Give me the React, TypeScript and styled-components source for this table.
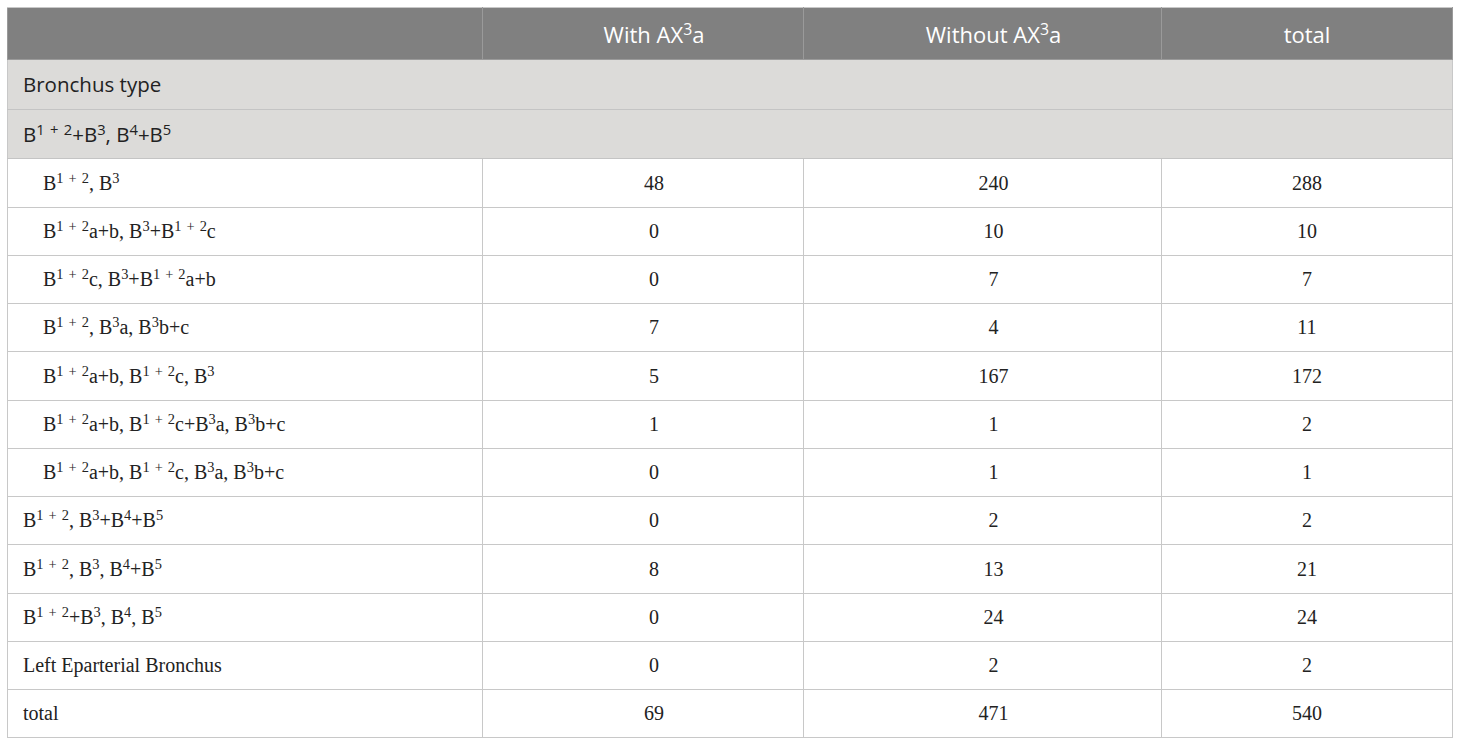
import React from "react";
import styled, { createGlobalStyle } from "styled-components";

const Global = createGlobalStyle`
  html, body { margin: 0; padding: 0; background: #ffffff; }
  body { padding: 7px 0 0 7px; }
`;

const Table = styled.table`
  border-collapse: collapse;
  width: 1445px;
  table-layout: fixed;
  border: 1px solid #c8c8c8;
`;

const HeadRow = styled.tr`
  height: 52px;
  background: #808080;
`;

const HeadCell = styled.th<{ $pad?: number }>`
  border: 1px solid #9a9a9a;
  border-top-color: #c8c8c8;
  color: #ffffff;
  font-family: "Open Sans", "Liberation Sans", sans-serif;
  font-weight: 400;
  font-size: 22px;
  text-align: center;
  padding: 0 0 0 ${(p) => p.$pad ?? 0}px;
  vertical-align: middle;
`;

const GroupRow = styled.tr`
  height: 49.7px;
  background: #dcdbd9;
`;

const GroupCell = styled.td`
  border-top: 1px solid #c4c4c4;
  border-bottom: 1px solid #c4c4c4;
  color: #222222;
  font-family: "Open Sans", "Liberation Sans", sans-serif;
  font-size: 20.5px;
  padding: 0 0 0 15px;
  vertical-align: middle;
`;

const DataRow = styled.tr`
  height: 48.25px;
  background: #ffffff;
`;

const LabelCell = styled.td<{ $indent?: boolean }>`
  border: 1px solid #c8c8c8;
  color: #222222;
  font-family: "Liberation Serif", "Times New Roman", serif;
  font-size: 20px;
  padding: 0 0 0 ${(p) => (p.$indent ? 35 : 15)}px;
  vertical-align: middle;
  white-space: nowrap;
`;

const NumCell = styled.td<{ $pad?: number }>`
  border: 1px solid #c8c8c8;
  color: #222222;
  font-family: "Liberation Serif", "Times New Roman", serif;
  font-size: 20px;
  text-align: center;
  padding: 0 0 0 ${(p) => p.$pad ?? 0}px;
  vertical-align: middle;
`;

const Sup = styled.sup`
  font-size: 0.72em;
  line-height: 0;
  vertical-align: 0.5em;
  word-spacing: 0.1em;
`;

type Row = { label: React.ReactNode; indent?: boolean; a: string; b: string; c: string };

const S = ({ children }: { children: React.ReactNode }) => <Sup>{children}</Sup>;
const B12 = () => (
  <>
    B<S>1 + 2</S>
  </>
);

const rows: Row[] = [
  { label: <><B12 />, B<S>3</S></>, indent: true, a: "48", b: "240", c: "288" },
  { label: <><B12 />a+b, B<S>3</S>+<B12 />c</>, indent: true, a: "0", b: "10", c: "10" },
  { label: <><B12 />c, B<S>3</S>+<B12 />a+b</>, indent: true, a: "0", b: "7", c: "7" },
  { label: <><B12 />, B<S>3</S>a, B<S>3</S>b+c</>, indent: true, a: "7", b: "4", c: "11" },
  { label: <><B12 />a+b, <B12 />c, B<S>3</S></>, indent: true, a: "5", b: "167", c: "172" },
  { label: <><B12 />a+b, <B12 />c+B<S>3</S>a, B<S>3</S>b+c</>, indent: true, a: "1", b: "1", c: "2" },
  { label: <><B12 />a+b, <B12 />c, B<S>3</S>a, B<S>3</S>b+c</>, indent: true, a: "0", b: "1", c: "1" },
  { label: <><B12 />, B<S>3</S>+B<S>4</S>+B<S>5</S></>, a: "0", b: "2", c: "2" },
  { label: <><B12 />, B<S>3</S>, B<S>4</S>+B<S>5</S></>, a: "8", b: "13", c: "21" },
  { label: <><B12 />+B<S>3</S>, B<S>4</S>, B<S>5</S></>, a: "0", b: "24", c: "24" },
  { label: "Left Eparterial Bronchus", a: "0", b: "2", c: "2" },
  { label: "total", a: "69", b: "471", c: "540" },
];

export default function App() {
  return (
    <>
      <Global />
      <Table>
        <colgroup>
          <col style={{ width: 475 }} />
          <col style={{ width: 321 }} />
          <col style={{ width: 358 }} />
          <col style={{ width: 291 }} />
        </colgroup>
        <thead>
          <HeadRow>
            <HeadCell />
            <HeadCell $pad={22}>
              With AX<Sup>3</Sup>a
            </HeadCell>
            <HeadCell $pad={22}>
              Without AX<Sup>3</Sup>a
            </HeadCell>
            <HeadCell>total</HeadCell>
          </HeadRow>
        </thead>
        <tbody>
          <GroupRow>
            <GroupCell colSpan={4}>Bronchus type</GroupCell>
          </GroupRow>
          <GroupRow>
            <GroupCell colSpan={4}>
              B<Sup>1 + 2</Sup>+B<Sup>3</Sup>, B<Sup>4</Sup>+B<Sup>5</Sup>
            </GroupCell>
          </GroupRow>
          {rows.map((r, i) => (
            <DataRow key={i}>
              <LabelCell $indent={r.indent}>{r.label}</LabelCell>
              <NumCell $pad={22}>{r.a}</NumCell>
              <NumCell $pad={22}>{r.b}</NumCell>
              <NumCell>{r.c}</NumCell>
            </DataRow>
          ))}
        </tbody>
      </Table>
    </>
  );
}
